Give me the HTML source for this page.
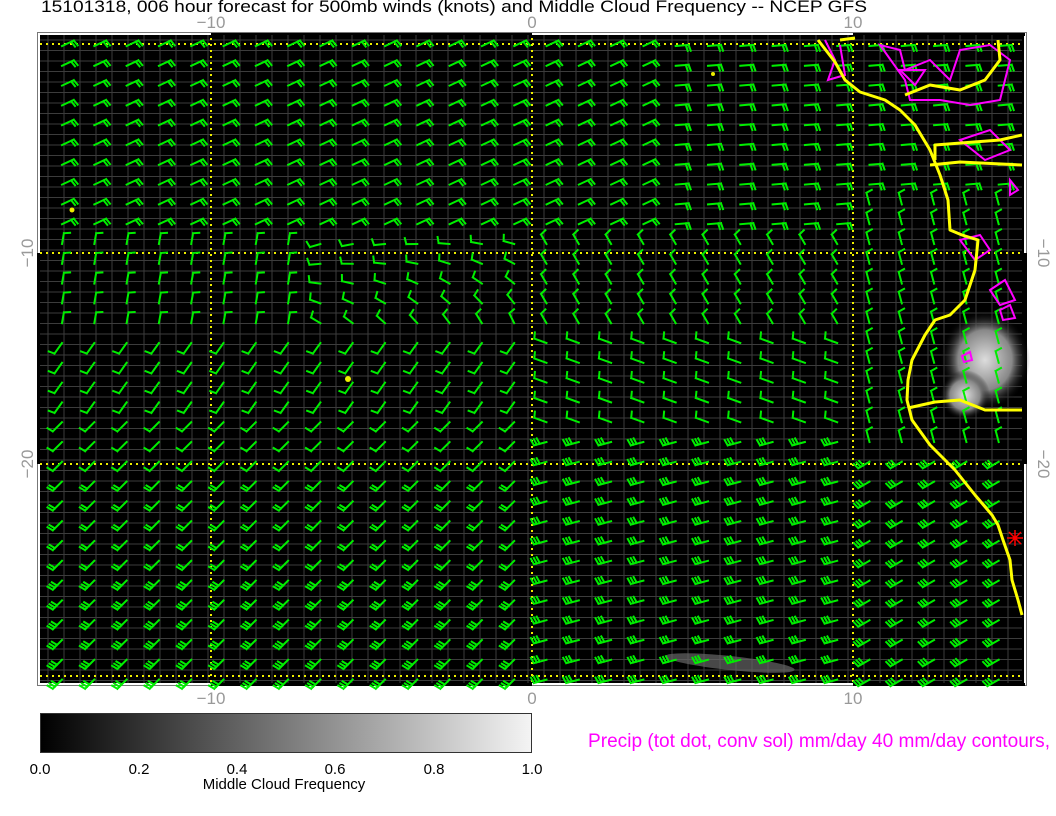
<!DOCTYPE html>
<html><head><meta charset="utf-8"><style>
html,body{margin:0;padding:0;background:#fff;width:1056px;height:816px;overflow:hidden}
svg{display:block}
text{font-family:"Liberation Sans",sans-serif}
</style></head><body>
<svg id="s" width="1056" height="816" viewBox="0 0 1056 816" xmlns="http://www.w3.org/2000/svg">
<defs>
<linearGradient id="cb" x1="0" x2="1" y1="0" y2="0"><stop offset="0" stop-color="#000"/><stop offset="1" stop-color="#f4f4f4"/></linearGradient>
<radialGradient id="cl" cx="0.5" cy="0.5" r="0.5"><stop offset="0" stop-color="#ddd"/><stop offset="0.6" stop-color="#888"/><stop offset="1" stop-color="#000" stop-opacity="0"/></radialGradient>
</defs>
<text x="41" y="12" font-size="17" fill="#000" textLength="826" lengthAdjust="spacingAndGlyphs">15101318, 006 hour forecast for 500mb winds (knots) and Middle Cloud Frequency -- NCEP GFS</text>
<g font-size="17" fill="#999" text-anchor="middle">
<text x="211" y="28">−10</text><text x="532" y="28">0</text><text x="853" y="28">10</text>
<text x="211" y="704">−10</text><text x="532" y="704">0</text><text x="853" y="704">10</text>
<text transform="translate(33,253) rotate(-90)">−10</text><text transform="translate(33,464) rotate(-90)">−20</text>
<text transform="translate(1038,253) rotate(90)">−10</text><text transform="translate(1038,464) rotate(90)">−20</text>
</g>
<rect x="37.5" y="32.5" width="989" height="653" fill="#fff" stroke="#777"/>
<rect x="40" y="35" width="984" height="648" fill="#000"/>
<rect x="211" y="33" width="321" height="3" fill="#000"/><rect x="853" y="33" width="172" height="3" fill="#000"/>
<rect x="211" y="683" width="321" height="3" fill="#000"/><rect x="853" y="683" width="172" height="3" fill="#000"/>
<rect x="37" y="253" width="4" height="211" fill="#000"/><rect x="1022" y="253" width="5" height="211" fill="#000"/>
<g id="grid" stroke="#3c3c3c" stroke-width="1"></g>
<ellipse cx="985" cy="360" rx="45" ry="50" fill="url(#cl)"/>
<ellipse cx="965" cy="395" rx="25" ry="25" fill="url(#cl)"/>
<ellipse cx="730" cy="663" rx="65" ry="7" fill="#666" opacity="0.7" transform="rotate(6 730 663)"/>
<g stroke="#ee0" stroke-width="2" stroke-dasharray="2 4" fill="none">
<line x1="211" y1="38" x2="211" y2="683"/><line x1="532" y1="38" x2="532" y2="683"/><line x1="853" y1="38" x2="853" y2="683"/>
<line x1="40" y1="44" x2="1022" y2="44"/><line x1="40" y1="253" x2="1022" y2="253"/><line x1="40" y1="464" x2="1022" y2="464"/><line x1="40" y1="676" x2="1022" y2="676"/>
</g>
<g id="barbs" stroke="#0e0" stroke-width="2" fill="none" stroke-linecap="square"></g>
<g stroke="#f0f" stroke-width="2" fill="none">
<path d="M825 40 L835 60 L828 80 L845 75 L840 45"/>
<path d="M880 45 L900 50 L905 70 L930 60 L950 80 L960 50 L990 45 L1010 60 L1000 100 L970 105 L940 100 L910 100 L905 80 Z"/>
<path d="M900 70 L915 85 L925 70 Z"/><path d="M960 140 L990 130 L1010 150 L985 160 Z"/>
<path d="M1010 180 L1018 190 L1010 195 Z"/><path d="M990 290 L1005 280 L1015 300 L1000 305 Z"/>
<path d="M960 240 L980 235 L990 250 L975 260 Z"/><path d="M962 356 L970 352 L972 360 L964 362 Z"/>
<path d="M1000 310 L1010 305 L1015 318 L1003 320 Z"/>
</g>
<g stroke="#ff0" stroke-width="3" fill="none" stroke-linejoin="round">
<path d="M818 40 L835 62 L845 80 L860 92 L885 100 L900 110 L915 125 L930 150 L940 175 L948 200 L950 230 L962 235 L978 240 L975 270 L965 300 L950 315 L935 320 L925 335 L912 360 L908 380 L907 400 L912 420 L930 445 L955 470 L975 495 L992 515 L998 525 L1003 540 L1010 560 L1012 580 L1018 600 L1022 615"/>
<path d="M908 408 L935 402 L960 400 L985 410 L1022 410"/>
<path d="M930 165 L960 162 L1022 165"/><path d="M935 160 L935 145 L1000 140 L1022 135"/>
<path d="M905 95 L930 85 L960 90 L985 80 L1000 60 L998 40"/>
<path d="M840 40 L855 38"/>
</g>
<g stroke="#f00" stroke-width="1.5"><path d="M1007 538 L1023 538 M1015 530 L1015 546 M1009 532 L1021 544 M1021 532 L1009 544"/></g>
<circle cx="348" cy="379" r="3" fill="#ee0"/><circle cx="72" cy="210" r="2.5" fill="#ee0"/><circle cx="713" cy="74" r="2" fill="#ee0"/>
<rect x="40.5" y="713.5" width="491" height="39" fill="url(#cb)" stroke="#333"/>
<g font-size="15" fill="#000" text-anchor="middle">
<text x="40" y="774">0.0</text><text x="139" y="774">0.2</text><text x="237" y="774">0.4</text><text x="335" y="774">0.6</text><text x="434" y="774">0.8</text><text x="532" y="774">1.0</text>
<text x="284" y="789">Middle Cloud Frequency</text>
</g>
<text x="588" y="747" font-size="19" fill="#f0f" textLength="462" lengthAdjust="spacingAndGlyphs">Precip (tot dot, conv sol) mm/day 40 mm/day contours,</text>
</svg>
<script>
var g=document.getElementById("grid"),h="";
for(var x=48;x<1022;x+=16)h+='<line x1="'+x+'" y1="35" x2="'+x+'" y2="683"/>';
for(var y=40;y<683;y+=10.5)h+='<line x1="40" y1="'+y+'" x2="1022" y2="'+y+'"/>';
g.innerHTML=h;
var b=document.getElementById("barbs"),p="";
for(var j=0;j<33;j++){for(var i=0;i<30;i++){
 var x=62+i*32.3,y=46+j*19.8,a,n,L=13;
 if(j<10){a=(x>650?-5:-25);n=2;}
 else if(j<15){a=(x<300?-80:(x<520?-200+(j-10)*12+(x-300)/6:-120));n=1;L=11;}
 else{ if(x<520){a=135-(j<19?10:0);n=(j<22?1:2)+(j>26?1:0);} else if(x<850){a=(j<20?200:165);n=(j<20?1:3);} else {a=150;n=3;} }
 if(x>850&&j>=8&&j<=20){a=-105;n=1;L=12;}
 var r=a*Math.PI/180,dx=Math.cos(r),dy=Math.sin(r);
 var tx=x+dx*L,ty=y+dy*L;
 var d="M"+x.toFixed(1)+" "+y.toFixed(1)+"L"+tx.toFixed(1)+" "+ty.toFixed(1);
 var px=-dy,py=dx;
 for(var k=0;k<n;k++){var sx=tx-dx*k*3,sy=ty-dy*k*3;
  d+="M"+sx.toFixed(1)+" "+sy.toFixed(1)+"l"+(px*6+dx*1.5).toFixed(1)+" "+(py*6+dy*1.5).toFixed(1);}
 p+='<path d="'+d+'"/>';
}}
b.innerHTML=p;
</script>
</body></html>
